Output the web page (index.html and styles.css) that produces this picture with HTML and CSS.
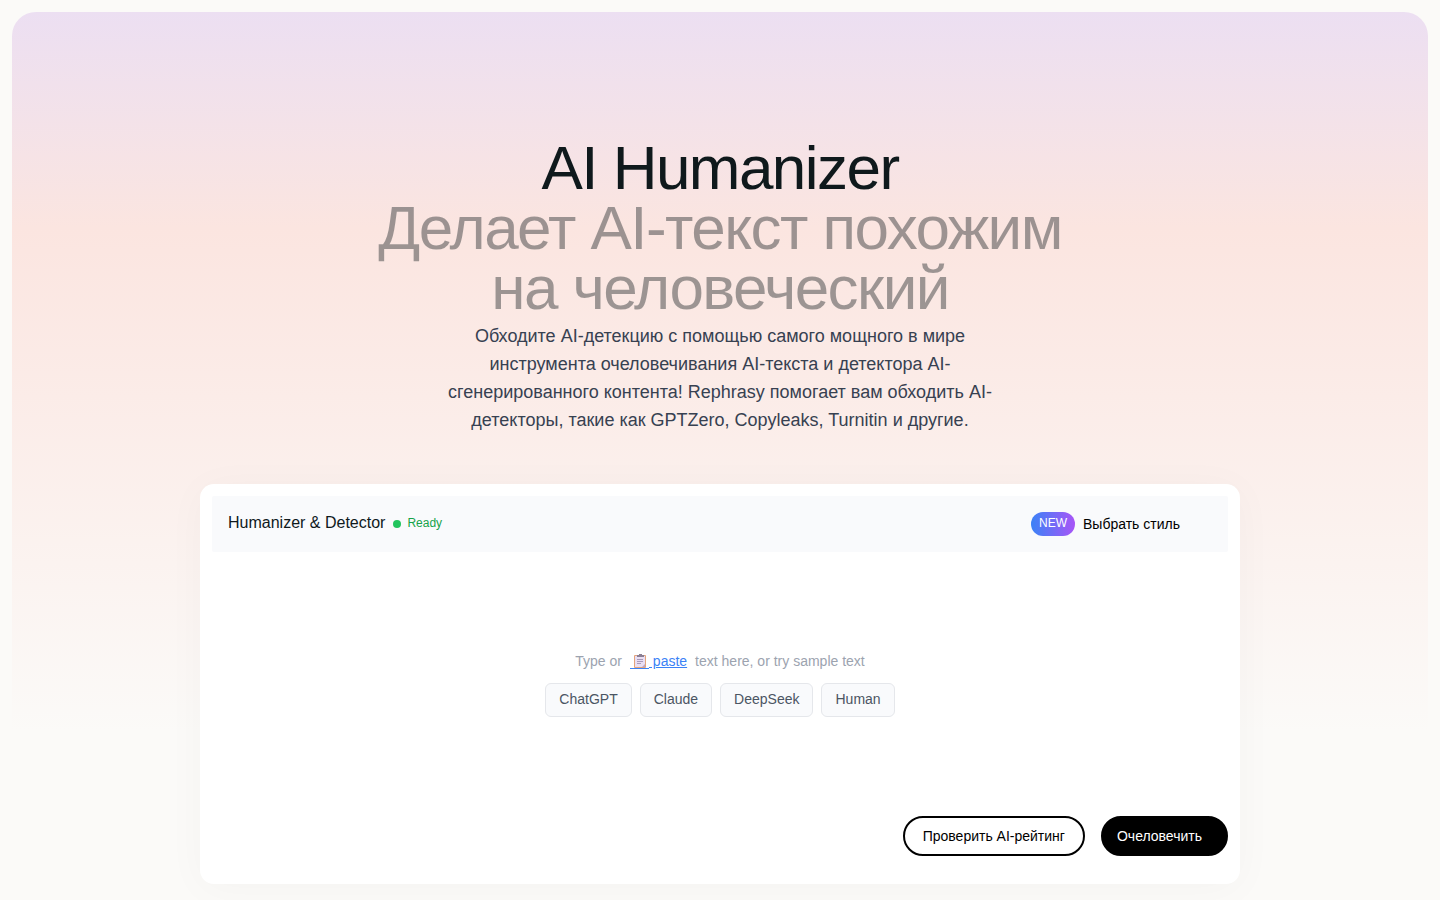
FILE: index.html
```
<!DOCTYPE html>
<html lang="ru">
<head>
<meta charset="utf-8">
<meta name="viewport" content="width=device-width, initial-scale=1">
<title>AI Humanizer</title>
<link rel="stylesheet" href="styles.css">
</head>
<body>
<main class="hero">
  <header class="intro">
    <h1 class="title">AI Humanizer<br><span class="title-muted">Делает AI-текст похожим на человеческий</span></h1>
    <p class="lead">Обходите AI-детекцию с помощью самого мощного в мире инструмента очеловечивания AI-текста и детектора AI-сгенерированного контента! Rephrasy помогает вам обходить AI-детекторы, такие как GPTZero, Copyleaks, Turnitin и другие.</p>
  </header>
  <section class="card">
    <div class="toolbar">
      <div class="status">
        <h2 class="tool-name">Humanizer &amp; Detector</h2>
        <span class="dot"></span>
        <span class="ready">Ready</span>
      </div>
      <button class="style-button" type="button"><span class="badge">NEW</span>Выбрать стиль</button>
    </div>
    <div class="editor">
      <p class="hint">
        <span>Type or</span>
        <a class="paste" href="#"><svg class="clipboard" viewBox="0 0 19 17" aria-hidden="true"><path d="M0 15.500h19" stroke="#3b82f6"/><rect x="4" y="2" width="12" height="13" rx="1" fill="#e4a47c"/><rect x="5" y="3" width="10" height="11" fill="#e9def3"/><path d="M12 14l3-3v3z" fill="#b9a5cb"/><path d="M7 4V2h2V1h3v1h2v2z" fill="#8b7f94"/><path d="M7 6.500h6M7 8.500h6M7 10.500h4" stroke="#a99abb" fill="none"/></svg>&nbsp;paste</a>
        <span>text here, or try sample text</span>
      </p>
      <div class="samples">
        <button class="sample" type="button">ChatGPT</button>
        <button class="sample" type="button">Claude</button>
        <button class="sample" type="button">DeepSeek</button>
        <button class="sample" type="button">Human</button>
      </div>
    </div>
    <div class="actions">
      <button class="action action-outline" type="button">Проверить AI-рейтинг</button>
      <button class="action action-solid" type="button">Очеловечить</button>
    </div>
  </section>
</main>
</body>
</html>
```
FILE: styles.css
```
* { box-sizing: border-box; }
body {
  margin: 0;
  padding: 12px 12px 0;
  background: #fbfaf8;
  font-family: "Liberation Sans", Arial, sans-serif;
  color: #0f191c;
}
h1, h2, p { margin: 0; font-weight: 400; }
button { font: inherit; cursor: pointer; }
.hero {
  display: flex;
  flex-direction: column;
  align-items: center;
  gap: 48px;
  padding: 126px 24px 16px;
  border-radius: 24px;
  background: linear-gradient(180deg, #ecdff2 0, #fbe5e0 216px, #fbfaf8 720px);
}
.intro { display: flex; flex-direction: column; align-items: center; text-align: center; }
.title {
  max-width: 740px;
  font-size: 62px;
  line-height: 60px;
  letter-spacing: -0.025em;
}
.title-muted { opacity: 0.4; color: #0f191c; }
.lead {
  max-width: 576px;
  padding: 4px 0 2px;
  font-size: 18px;
  line-height: 28px;
  color: #374151;
}
.card {
  width: 100%;
  max-width: 1040px;
  display: flex;
  flex-direction: column;
  padding: 12px 12px 28px;
  border-radius: 14px;
  background: #fff;
  box-shadow: 0 4px 40px rgba(0, 0, 0, 0.03);
}
.toolbar {
  display: flex;
  align-items: center;
  justify-content: space-between;
  min-height: 56px;
  padding: 0 48px 0 16px;
  background: #f9fafc;
  border-radius: 2px;
}
.status { display: flex; align-items: center; }
.tool-name { padding-bottom: 2px; font-size: 16px; line-height: 24px; margin-right: 8px; }
.dot { width: 8px; height: 8px; margin-right: 6px; border-radius: 50%; background: #22c55e; }
.ready { padding-bottom: 2px; font-size: 12px; line-height: 16px; color: #16a34a; }
.style-button {
  display: flex;
  align-items: center;
  gap: 8px;
  padding: 0;
  border: 0;
  background: none;
  color: #000;
  font-size: 14px;
}
.badge {
  padding: 0 8px 2px;
  border-radius: 12px;
  background: linear-gradient(90deg, #3b82f6, #a855f7);
  color: #fff;
  font-size: 12px;
  line-height: 22px;
}
.editor {
  min-height: 264px;
  display: flex;
  flex-direction: column;
  align-items: center;
  justify-content: center;
  gap: 12px;
}
.hint { display: flex; gap: 8px; font-size: 14px; line-height: 20px; color: #9ca3af; }
.paste { color: #3b82f6; text-decoration: underline; }
.clipboard { width: 19px; height: 17px; vertical-align: -4px; }
.samples { display: flex; gap: 8px; }
.sample {
  padding: 6px 13px 8px;
  border: 1px solid #e5e7eb;
  border-radius: 6px;
  background: #f9fafc;
  color: #4b5563;
  font-size: 14px;
  line-height: 18px;
}
.actions { display: flex; justify-content: flex-end; gap: 16px; }
.action {
  height: 40px;
  padding-bottom: 2px;
  border: 2px solid #000;
  border-radius: 20px;
  font-size: 14px;
}
.action-outline { padding-left: 18px; padding-right: 18px; background: #fff; color: #000; }
.action-solid { padding-left: 14px; padding-right: 24px; background: #000; color: #fff; }
```
